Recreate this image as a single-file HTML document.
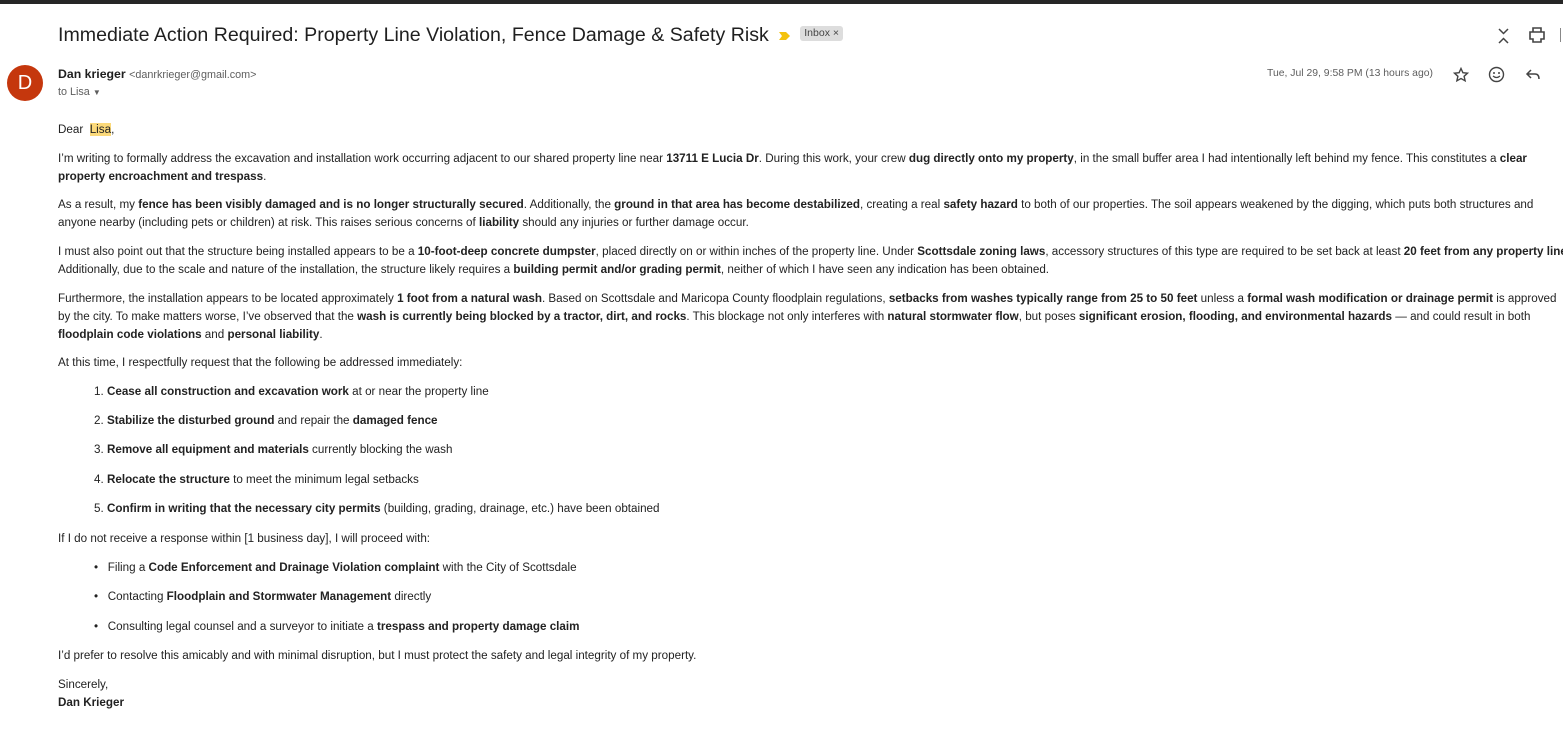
<!DOCTYPE html>
<html><head><meta charset="utf-8"><style>
body{margin:0;width:1563px;height:735px;overflow:hidden;background:#fff;font-family:"Liberation Sans",Arial,sans-serif;color:#222;position:relative}
.bar{position:absolute;left:0;top:0;width:1563px;height:4px;background:#262626}
.a{position:absolute;white-space:nowrap;font-size:11.65px;line-height:18px}
b{font-weight:bold}
.title{position:absolute;left:58px;top:21px;font-size:19.6px;color:#1f1f1f;white-space:nowrap;line-height:28px}
.tag{display:inline-block;background:#ddd;color:#444;font-size:10.5px;line-height:15px;padding:0 4px;border-radius:3px;vertical-align:middle;margin-left:8px;position:relative;top:-2px}
.av{position:absolute;left:7px;top:65px;width:36px;height:36px;border-radius:50%;background:#c5370d;color:#fff;font-size:20px;line-height:36px;text-align:center}
</style></head><body>
<div class="bar"></div>
<div class="title">Immediate Action Required: Property Line Violation, Fence Damage &amp; Safety Risk <svg width="14" height="12" viewBox="0 0 14 12" style="vertical-align:middle;margin-left:4px"><path d="M1 2h7l4 4-4 4H1l3-4z" fill="#f4c20d"/></svg><span class="tag">Inbox ×</span></div>
<svg style="position:absolute;left:1497px;top:27px" width="13" height="18" viewBox="0 0 13 18"><path d="M2 2l4.5 4.5L11 2M2 16l4.5-4.5L11 16" fill="none" stroke="#444" stroke-width="1.5"/></svg>
<svg style="position:absolute;left:1529px;top:27px" width="16" height="16" viewBox="0 0 16 16"><path d="M4 1h8v4H4zM1 5h14v7h-3v3H4v-3H1z" fill="none" stroke="#444" stroke-width="1.6"/></svg>
<div style="position:absolute;left:1560px;top:28px;width:3px;height:14px;border-left:1.5px solid #888"></div>
<div class="av">D</div>
<div class="a" style="left:58px;top:65px;font-size:12.3px;color:#1f1f1f"><b>Dan krieger</b> <span style="font-size:10.8px;color:#5e5e5e">&lt;danrkrieger@gmail.com&gt;</span></div>
<div class="a" style="left:58px;top:83px;font-size:10.8px;color:#5e5e5e">to Lisa <span style="font-size:8px">▼</span></div>
<div class="a" style="left:1267px;top:65px;font-size:10.4px;color:#5e5e5e">Tue, Jul 29, 9:58 PM (13 hours ago)</div>
<svg style="position:absolute;left:1453px;top:67px" width="16" height="16" viewBox="0 0 16 16"><path d="M8 1.5l1.9 4.2 4.6.5-3.4 3.1 1 4.5L8 11.5l-4.1 2.3 1-4.5L1.5 6.2l4.6-.5z" fill="none" stroke="#444" stroke-width="1.4"/></svg>
<svg style="position:absolute;left:1488px;top:66px" width="17" height="17" viewBox="0 0 17 17"><circle cx="8.5" cy="8.5" r="7" fill="none" stroke="#444" stroke-width="1.4"/><circle cx="6" cy="7" r="1" fill="#444"/><circle cx="11" cy="7" r="1" fill="#444"/><path d="M5 10q3.5 3 7 0" fill="none" stroke="#444" stroke-width="1.3"/></svg>
<svg style="position:absolute;left:1525px;top:68px" width="16" height="14" viewBox="0 0 16 14"><path d="M6 2L2 6l4 4M2 6h8q4 0 4 5" fill="none" stroke="#444" stroke-width="1.5"/></svg>

<div class="a" style="left:58px;top:121px">Dear &nbsp;<span style="background:#fbd97a">Lisa</span>,</div>
<div class="a" style="left:58px;top:150px">I’m writing to formally address the excavation and installation work occurring adjacent to our shared property line near <b>13711 E Lucia Dr</b>. During this work, your crew <b>dug directly onto my property</b>, in the small buffer area I had intentionally left behind my fence. This constitutes a <b>clear</b><br><b>property encroachment and trespass</b>.</div>
<div class="a" style="left:58px;top:196px">As a result, my <b>fence has been visibly damaged and is no longer structurally secured</b>. Additionally, the <b>ground in that area has become destabilized</b>, creating a real <b>safety hazard</b> to both of our properties. The soil appears weakened by the digging, which puts both structures and<br>anyone nearby (including pets or children) at risk. This raises serious concerns of <b>liability</b> should any injuries or further damage occur.</div>
<div class="a" style="left:58px;top:243px">I must also point out that the structure being installed appears to be a <b>10-foot-deep concrete dumpster</b>, placed directly on or within inches of the property line. Under <b>Scottsdale zoning laws</b>, accessory structures of this type are required to be set back at least <b>20 feet from any property line</b><br>Additionally, due to the scale and nature of the installation, the structure likely requires a <b>building permit and/or grading permit</b>, neither of which I have seen any indication has been obtained.</div>
<div class="a" style="left:58px;top:290px">Furthermore, the installation appears to be located approximately <b>1 foot from a natural wash</b>. Based on Scottsdale and Maricopa County floodplain regulations, <b>setbacks from washes typically range from 25 to 50 feet</b> unless a <b>formal wash modification or drainage permit</b> is approved<br>by the city. To make matters worse, I’ve observed that the <b>wash is currently being blocked by a tractor, dirt, and rocks</b>. This blockage not only interferes with <b>natural stormwater flow</b>, but poses <b>significant erosion, flooding, and environmental hazards</b> — and could result in both<br><b>floodplain code violations</b> and <b>personal liability</b>.</div>
<div class="a" style="left:58px;top:354px">At this time, I respectfully request that the following be addressed immediately:</div>
<div class="a" style="left:94px;top:383px">1. <b>Cease all construction and excavation work</b> at or near the property line</div>
<div class="a" style="left:94px;top:412px">2. <b>Stabilize the disturbed ground</b> and repair the <b>damaged fence</b></div>
<div class="a" style="left:94px;top:441px">3. <b>Remove all equipment and materials</b> currently blocking the wash</div>
<div class="a" style="left:94px;top:471px">4. <b>Relocate the structure</b> to meet the minimum legal setbacks</div>
<div class="a" style="left:94px;top:500px">5. <b>Confirm in writing that the necessary city permits</b> (building, grading, drainage, etc.) have been obtained</div>
<div class="a" style="left:58px;top:530px">If I do not receive a response within [1 business day], I will proceed with:</div>
<div class="a" style="left:94px;top:559px">•&nbsp;&nbsp;&nbsp;Filing a <b>Code Enforcement and Drainage Violation complaint</b> with the City of Scottsdale</div>
<div class="a" style="left:94px;top:588px">•&nbsp;&nbsp;&nbsp;Contacting <b>Floodplain and Stormwater Management</b> directly</div>
<div class="a" style="left:94px;top:618px">•&nbsp;&nbsp;&nbsp;Consulting legal counsel and a surveyor to initiate a <b>trespass and property damage claim</b></div>
<div class="a" style="left:58px;top:647px">I’d prefer to resolve this amicably and with minimal disruption, but I must protect the safety and legal integrity of my property.</div>
<div class="a" style="left:58px;top:676px">Sincerely,<br><b>Dan Krieger</b></div>
</body></html>
